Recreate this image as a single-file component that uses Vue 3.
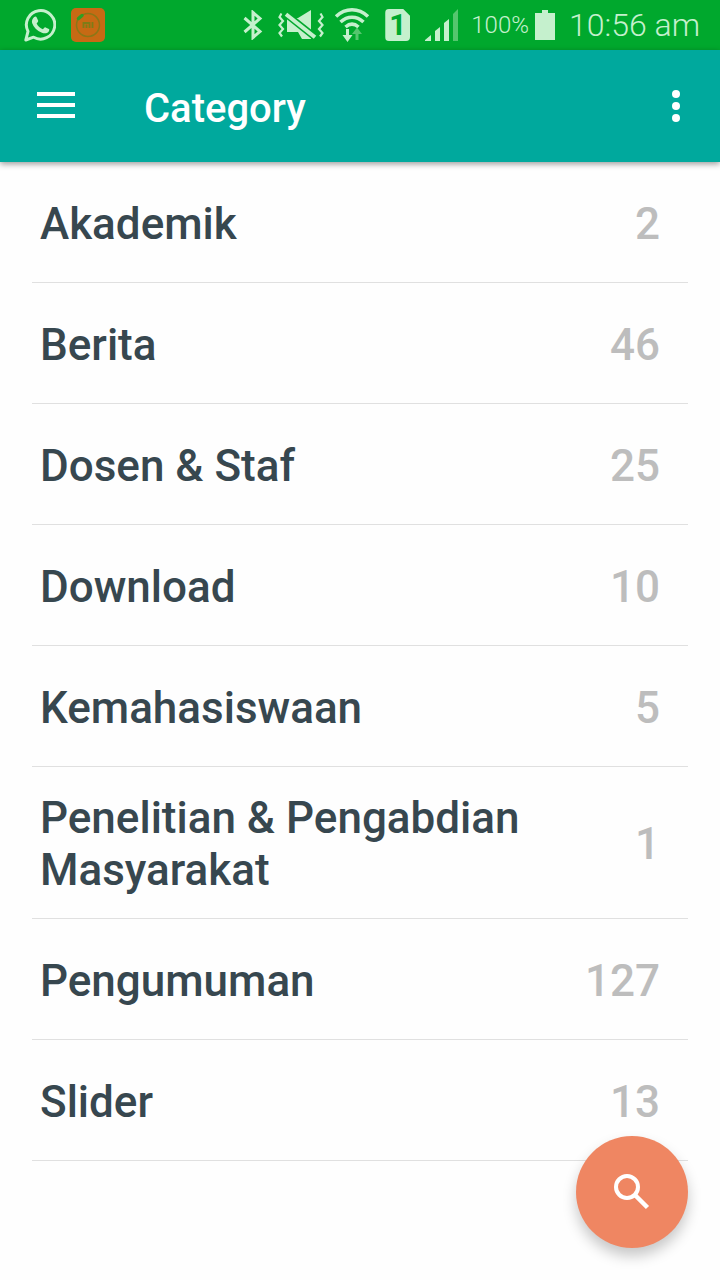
<script setup>
import { ref } from 'vue'

const categories = ref([
  { id: 1, name: 'Akademik', count: 2 },
  { id: 2, name: 'Berita', count: 46 },
  { id: 3, name: 'Dosen & Staf', count: 25 },
  { id: 4, name: 'Download', count: 10 },
  { id: 5, name: 'Kemahasiswaan', count: 5 },
  { id: 6, name: 'Penelitian & Pengabdian Masyarakat', count: 1 },
  { id: 7, name: 'Pengumuman', count: 127 },
  { id: 8, name: 'Slider', count: 13 },
])
</script>

<template>
  <div class="screen">
    <div class="status-bar">
      <div class="notifications">
        <svg width="32" height="34" viewBox="0 0 32 34">
          <path d="M1.800 32 4 23.400A14.200 14.200 0 1 1 9.600 29.200Z" fill="none" stroke="#c5f0cd" stroke-width="3" stroke-linejoin="round" />
          <path d="M10.200 9c.9-.8 2-.8 2.400.2l1.500 3.300c.3.800-.1 1.300-1.500 2.900 1.500 3 3.400 4.600 6.300 5.900 1.300-1.300 1.800-2.400 2.700-1.900l3.300 1.700c.8.400.4 1.700-.3 2.600-1.600 1.800-4.200 2-6.700 1-4.900-2-8.400-5.400-9.800-9.700-.6-2.200.4-4.700 2.100-6Z" fill="#c5f0cd" />
        </svg>
        <svg width="34" height="34" viewBox="0 0 34 34">
          <rect width="34" height="34" rx="5" fill="#c76a14" />
          <circle cx="17" cy="17" r="11.500" fill="none" stroke="#8b7717" stroke-width="1.500" />
          <path d="M7.500 10.500 11 7.500" stroke="#2f9f22" stroke-width="3.500" stroke-linecap="round" />
          <path d="M12.500 20v-5h6v5M15.500 16.500V20M21.500 14V20" fill="none" stroke="#7d7c17" stroke-width="1.800" />
        </svg>
      </div>
      <svg class="bluetooth" width="20" height="30" viewBox="0 0 20 30">
        <path d="M1.500 8 17 21.500 10 27.500V2.500L17 8.500 1.500 22" fill="none" stroke="#c5f0cd" stroke-width="3" />
      </svg>
      <svg class="mute" width="46" height="32" viewBox="0 0 46 32">
        <path d="M3.500 4.500 1.500 8 5 12 1.500 16 5 20 1.500 24 4 27.500M42.500 4.500l2 3.500L41 12l3.500 4L41 20l3.500 4-2.500 3.500" fill="none" stroke="#c5f0cd" stroke-width="2.200" />
        <path d="M9 9h11L33 1v29H24L20 23H9Z" fill="#c5f0cd" />
        <path d="M6 3.600 39 29.800" stroke="#00a82d" stroke-width="7" />
        <path d="M8 5.200 37 28.200" stroke="#c5f0cd" stroke-width="4" />
      </svg>
      <svg class="wifi" width="36" height="34" viewBox="0 0 36 34">
        <g fill="none" stroke="#c5f0cd" stroke-width="3.500">
          <path d="M2 8.500C11.500-.5 24.500-.5 34 8.500" />
          <path d="M6.500 14C13.500 7.500 22.500 7.500 29.500 14" />
          <path d="M11.500 19C16 15 20 15 24.500 19" />
        </g>
        <path d="M12 21h3v6h3.500L13.500 34l-5-7H12Z" fill="#c5f0cd" />
        <path d="M21.500 32v-6H18l5-6.500 5 6.500h-3.500v6Z" fill="#55c66e" />
      </svg>
      <div class="sim">1</div>
      <svg class="signal" width="34" height="32" viewBox="0 0 34 32">
        <path d="M0 32v-1l6-5v6ZM10 32V22l5-4v14ZM19 32V14l5-4v22Z" fill="#c5f0cd" />
        <path d="M28 32V5l5-5v32Z" fill="#55c66e" />
      </svg>
      <span class="charge">100%</span>
      <svg class="battery" width="20" height="30" viewBox="0 0 20 30">
        <path d="M7 0h6v3h7v27H0V3h7Z" fill="#c5f0cd" />
      </svg>
      <span class="clock">10:56 am</span>
    </div>

    <header class="toolbar">
      <button class="icon-button" aria-label="Menu">
        <svg width="38" height="28" viewBox="0 0 38 28">
          <path d="M0 2h38M0 13h38M0 24h38" stroke="#fff" stroke-width="4" />
        </svg>
      </button>
      <h1>Category</h1>
      <button class="icon-button" aria-label="More options">
        <svg width="8" height="32" viewBox="0 0 8 32" fill="#fff">
          <circle cx="4" cy="4" r="4" />
          <circle cx="4" cy="16" r="4" />
          <circle cx="4" cy="28" r="4" />
        </svg>
      </button>
    </header>

    <ul class="list">
      <li v-for="item in categories" :key="item.id">
        <a href="#">
          <span class="name">{{ item.name }}</span>
          <span class="count">{{ item.count }}</span>
        </a>
      </li>
    </ul>

    <button class="fab" aria-label="Search">
      <svg width="36" height="36" viewBox="0 0 36 36" fill="none" stroke="#fff">
        <circle cx="13" cy="13" r="11" stroke-width="4" />
        <path d="M21.500 21.500 33.500 33.500" stroke-width="4.500" />
      </svg>
    </button>
  </div>
</template>

<style>
body {
  background: #fefefe;
}
</style>

<style scoped>
.screen {
  min-height: 100vh;
  font-family: Roboto, "Noto Sans", sans-serif;
}
.status-bar {
  display: flex;
  align-items: center;
  height: 50px;
  padding: 0 20px 0 24px;
  background: #00a82d;
  color: #c5f0cd;
  font-weight: 300;
  white-space: nowrap;
}
.status-bar svg {
  display: block;
  flex: none;
}
.notifications {
  display: flex;
  gap: 15px;
  margin-right: auto;
}
.bluetooth {
  margin-right: 15px;
}
.mute {
  margin-right: 10px;
}
.wifi {
  margin-right: 15px;
}
.sim {
  width: 25px;
  margin-right: 15px;
  border-radius: 4px;
  background: #c5f0cd;
  color: #00a82d;
  font-size: 30px;
  font-weight: 700;
  line-height: 32px;
  text-align: center;
  clip-path: polygon(0 0, 18px 0, 100% 7px, 100% 100%, 0 100%);
}
.signal {
  margin-right: 12px;
}
.charge {
  margin-right: 6px;
  font-size: 24px;
}
.battery {
  margin-right: 14px;
}
.clock {
  font-size: 32px;
}
.toolbar {
  display: flex;
  align-items: center;
  height: 112px;
  padding: 0 40px 0 37px;
  background: #00a99d;
  box-shadow: 0 2px 6px rgba(0, 0, 0, 0.4);
  color: #fff;
}
.toolbar h1 {
  flex: 1;
  margin: 0;
  padding: 4px 0 0 69px;
  font-size: 40px;
  font-weight: 500;
}
.icon-button {
  padding: 0;
  border: 0;
  background: none;
  cursor: pointer;
}
.icon-button svg {
  display: block;
}
.list {
  margin: 0;
  padding: 0 32px;
  list-style: none;
}
.list li {
  border-bottom: 1px solid #e0e0e0;
}
.list a {
  display: flex;
  align-items: center;
  justify-content: space-between;
  gap: 32px;
  box-sizing: border-box;
  min-height: 120px;
  padding: 25px 28px 22px 8px;
  color: #37474f;
  font-size: 44px;
  font-weight: 500;
  line-height: 52px;
  text-decoration: none;
}
.list .count {
  color: #bdbdbd;
}
.fab {
  position: fixed;
  right: 32px;
  bottom: 32px;
  display: flex;
  align-items: center;
  justify-content: center;
  width: 112px;
  height: 112px;
  padding: 0;
  border: 0;
  border-radius: 50%;
  background: #ef8662;
  box-shadow: 0 8px 14px rgba(0, 0, 0, 0.22);
  cursor: pointer;
}
</style>
